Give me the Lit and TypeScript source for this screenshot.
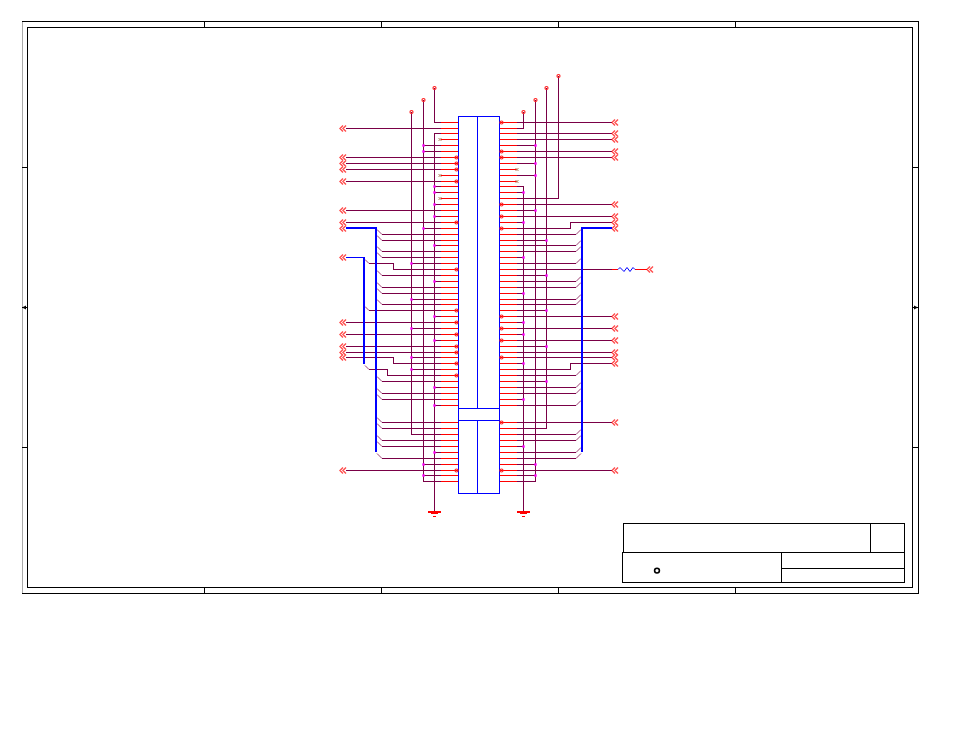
import { LitElement, css, html, svg } from 'lit'
import { customElement } from 'lit/decorators.js'

const MAROON = '#7a0046'
const RED = '#ff0000'
const BLUE = '#0000ff'

// pixel rows of the connector pins, upper and lower block
const ROWS = [
  122, 128, 133, 139, 145, 151, 157, 163, 169, 175, 181, 186, 192, 198, 204, 210, 216, 222, 228, 234, 240, 245, 251,
  257, 263, 269, 275, 281, 287, 293, 299, 304, 310, 316, 322, 328, 334, 340, 346, 352, 357, 363, 369, 375, 381, 387,
  393, 399, 405, 422, 428, 434, 440, 446, 452, 458, 464, 470, 475, 481,
]

// o off page, c off page with circle, n no connect, e bus entry,
// a number is the x of the net the pin joins, s is a pin wired separately
const LEFT: (string | number)[] = [
  434, 'o', 434, 'n', 423, 423, 'c', 'c', 'c', 'n', 'c', 434, 434, 'n', 434, 'o', 434, 'c', 423, 'e', 'e', 434, 'e',
  'e', 411, 's', 'e', 434, 'e', 'e', 411, 'e', 's', 434, 'c', 411, 'c', 434, 'c', 'c', 411, 's', 411, 's', 'e', 434,
  'e', 'e', 434, 'e', 'e', 411, 'e', 'e', 434, 'e', 423, 'c', 423, 423,
]
const RIGHT: (string | number)[] = [
  'c', 523, 'o', 'o', 535, 'c', 'c', 535, 'n', 535, 'n', 523, 523, 558, 'c', 535, 'c', 523, 's', 'e', 546, 'e', 'e',
  523, 'e', 's', 546, 'e', 'e', 523, 'e', 'e', 546, 'c', 523, 'c', 523, 'c', 546, 'o', 'c', 523, 's', 'e', 546, 'e',
  'e', 523, 'e', 'c', 546, 'e', 'e', 523, 'e', 'e', 535, 'c', 535, 535,
]

// pins where a net just turns the corner, so no junction dot
const CORNERS = new Set([
  'L434:122', 'L434:133', 'L411:434', 'L423:481',
  'R523:128', 'R523:186', 'R558:198', 'R546:428', 'R535:481',
])

const h = (x1: number, x2: number, y: number) => `M${x1} ${y + 0.5}H${x2}`
const v = (x: number, y1: number, y2: number) => `M${x + 0.5} ${y1}V${y2}`

function chevron(x: number, y: number) {
  const c = y + 0.5
  return `M${x + 3} ${c - 3}L${x} ${c}L${x + 3} ${c + 3}M${x + 6} ${c - 3}L${x + 3} ${c}L${x + 6} ${c + 3}`
}

function cross(x: number, y: number) {
  const c = y + 0.5
  return `M${x - 1.5} ${c - 1.5}L${x + 1.5} ${c + 1.5}M${x + 1.5} ${c - 1.5}L${x - 1.5} ${c + 1.5}`
}

function ground(x: number, y: number) {
  return [h(x - 6, x + 7, y), h(x - 6, x + 7, y + 1), h(x - 3, x + 4, y + 2), h(x - 1, x + 2, y + 5)].join('')
}

@customElement('sch-sheet')
export class SchSheet extends LitElement {
  private schematic() {
    let dark = ''
    let red = ''
    let diag = ''
    let chev = ''
    let nc = ''
    const dots: number[][] = []
    const rings: number[][] = []

    ROWS.forEach((y, i) => {
      const l = LEFT[i]
      const r = RIGHT[i]
      red += h(441, 458, y)
      if (l === 'n') {
        nc += cross(440, y)
      } else if (typeof l === 'number') {
        dark += h(l, 441, y)
        if (!CORNERS.has(`L${l}:${y}`)) dots.push([l, y])
      } else if (l === 'e') {
        dark += h(382, 441, y)
        diag += `M382 ${y + 0.5}L377 ${y - 4.5}`
      } else if (l === 'o' || l === 'c') {
        dark += h(346, 441, y)
        chev += chevron(340, y)
      }
      if (l === 'c') rings.push([456, y])

      red += h(500, 517, y)
      if (r === 'n') {
        nc += cross(517, y)
      } else if (typeof r === 'number') {
        dark += h(517, r + 1, y)
        if (!CORNERS.has(`R${r}:${y}`)) dots.push([r, y])
      } else if (r === 'e') {
        dark += h(517, 576, y)
        diag += `M576 ${y + 0.5}L581 ${y - 4.5}`
      } else if (r === 'o' || r === 'c') {
        dark += h(517, 612, y)
        chev += chevron(612, y)
      }
      if (r === 'c') rings.push([501, y])
    })

    // left verticals
    dark += v(434, 88, 123) + v(434, 133, 511) + v(423, 100, 482) + v(411, 112, 435)
    // right verticals
    dark += v(523, 112, 129) + v(523, 186, 511) + v(535, 100, 482) + v(546, 88, 429) + v(558, 76, 199)

    // left nets that step between rows
    dark += h(369, 393, 263) + v(393, 263, 270) + h(393, 441, 269)
    dark += h(369, 441, 310)
    dark += h(346, 393, 357) + v(393, 357, 364) + h(393, 441, 363)
    dark += h(369, 387, 369) + v(387, 369, 376) + h(387, 441, 375)
    diag += 'M369 263.5L365 259.5M369 310.5L365 306.5M369 369.5L365 365.5'
    rings.push([456, 269], [456, 310], [456, 363], [456, 375])
    chev += chevron(340, 357)

    // right nets that step between rows
    dark += h(517, 570, 228) + v(570, 222, 229) + h(570, 612, 222)
    chev += chevron(612, 222)
    rings.push([501, 228])
    dark += h(517, 570, 369) + v(570, 363, 370) + h(570, 612, 363)
    chev += chevron(612, 363)
    dark += h(517, 612, 269)
    // buses run off the sheet through these
    chev += chevron(340, 228) + chevron(612, 228) + chevron(340, 257) + chevron(647, 269)

    const tops = [
      [434, 88], [423, 100], [411, 112], [523, 112], [535, 100], [546, 88], [558, 76],
    ]

    return svg`
      <g class="crisp" fill="none">
        <path stroke=${RED} d=${red} />
        <path stroke=${MAROON} d=${dark} />
        <path stroke=${RED} d=${h(612, 618, 269) + h(635, 647, 269) + ground(434, 511) + ground(523, 511)} />
      </g>
      <path fill="none" stroke=${MAROON} stroke-opacity="0.75" d=${diag} />
      <path fill="none" stroke=${BLUE} d="M618 269.5L620 267.5L624 271.5L627 267.5L630 271.5L633 267.5L635 269.5" />
      <path fill="none" stroke=${RED} stroke-opacity="0.7" stroke-width="1.4" d=${chev} />
      <path fill="none" stroke="#b5805f" d=${nc} />
      <g class="crisp" fill="none" stroke=${BLUE}>
        <path d="M458.5 116.5H499.5V493.5H458.5ZM477.5 116.5V408.5M477.5 420.5V493.5M458.5 408.5H499.5M458.5 420.5H499.5" />
        <path d="M346 257.5H364" />
        <path stroke-width="2" d="M346 228H376V452M582 452V228H612M364 257V364" />
      </g>
      ${dots.map(([x, y]) => svg`<rect x=${x - 0.7} y=${y - 0.7} width="2.4" height="2.4" fill="#ff00ff" />`)}
      ${rings.map(([x, y]) => svg`<circle cx=${x + 0.5} cy=${y + 0.5} r="1.5" fill="none" stroke="#ff2020" stroke-width="1.2" />`)}
      ${tops.map(([x, y]) => svg`<circle cx=${x + 0.5} cy=${y} r="1.5" fill="none" stroke="#ff2020" stroke-width="1.2" />`)}
    `
  }

  private frame() {
    const ticks = [204, 381, 558, 735]
      .map((x) => `M${x + 0.5} 22V27M${x + 0.5} 588V593`)
      .join('')
    const sideTicks = [167, 307, 447]
      .map((y) => `M22 ${y + 0.5}H27M913 ${y + 0.5}H918`)
      .join('')
    return svg`
      <g class="crisp" fill="none" stroke="#000">
        <path stroke="#aaa" d="M22.5 22V593" />
        <path d="M22 21.5H918.5V593.5H22M27.5 27.5H912.5V587.5H27.5Z" />
        <path d=${ticks + sideTicks} />
        <path d="M623.5 523.5H904.5V552.5H623.5ZM870.5 523.5V552.5M622.5 552.5H904.5V582.5H622.5ZM781.5 552.5V582.5M781.5 568.5H904.5" />
      </g>
      <path d="M22 307.5l4-2v4zM918 307.5l-4-2v4z" fill="#000" />
      <circle cx="657" cy="570.6" r="2.4" fill="none" stroke="#000" stroke-width="1.6" />
    `
  }

  protected render() {
    return html`
      <svg class="sheet" width="954" height="738" viewBox="0 0 954 738">
        ${this.frame()} ${this.schematic()}
      </svg>
    `
  }

  static styles = css`
    :host {
      display: block;
    }
    .sheet {
      display: block;
      background: #fff;
    }
    .crisp {
      shape-rendering: crispEdges;
    }
  `
}

@customElement('app-root')
export class AppRoot extends LitElement {
  protected render() {
    return html`<sch-sheet></sch-sheet>`
  }

  static styles = css`
    :host {
      display: block;
      width: 954px;
      height: 738px;
      background: #fff;
    }
  `
}
